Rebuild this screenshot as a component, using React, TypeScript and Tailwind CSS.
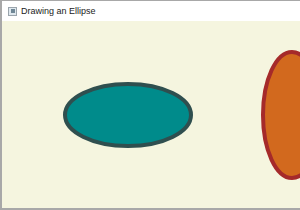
export default function App() {
  return (
    <div className="w-[300px] h-[210px] flex flex-col bg-[#f5f5dc] border-t border-b-2 border-l-2 border-[#a8a8a8] overflow-hidden font-['Liberation_Sans',sans-serif]">
      <div className="h-[20px] shrink-0 bg-white flex items-center gap-[4px] pl-[6px]">
        <div className="w-[9px] h-[9px] border border-[#9aa4ac] bg-[#dfe8ee] flex items-center justify-center">
          <div className="w-[4px] h-[4px] bg-[#6f8796]" />
        </div>
        <span className="text-[9px] text-[#222] leading-none">Drawing an Ellipse</span>
      </div>
      <div className="flex-1 bg-[#f5f5df]">
        <svg width="298" height="187" viewBox="2 21 298 187">
          <ellipse cx="128" cy="115" rx="63" ry="31" fill="#008b8b" stroke="#2f4f4f" strokeWidth="4" />
          <ellipse cx="292" cy="115" rx="29" ry="63" fill="#d2691e" stroke="#a52a2a" strokeWidth="4" />
        </svg>
      </div>
    </div>
  );
}
